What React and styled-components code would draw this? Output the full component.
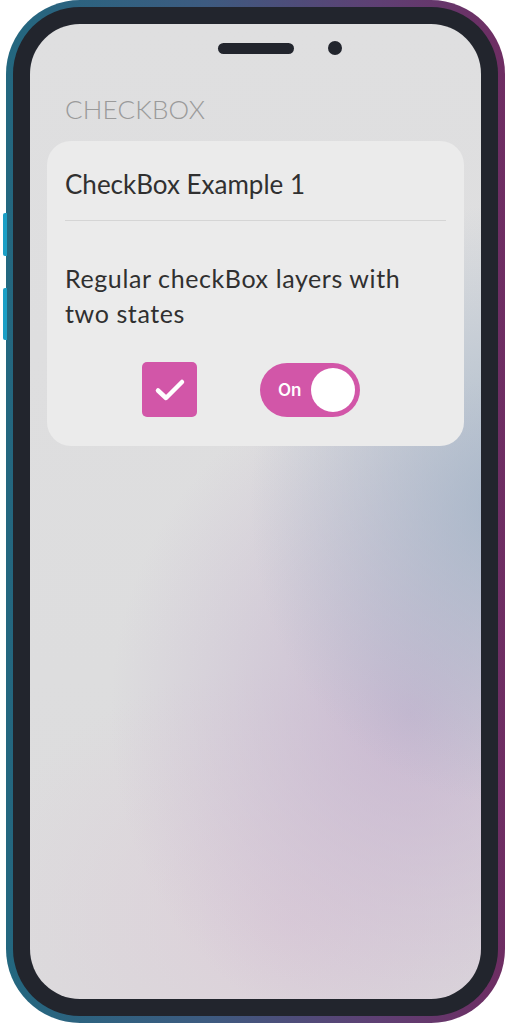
import React from 'react'
import styled, { createGlobalStyle } from 'styled-components'

const GlobalStyle = createGlobalStyle`
  html, body {
    margin: 0;
    padding: 0;
    background: #ffffff;
  }
  body {
    font-family: 'Lato', 'Noto Sans', sans-serif;
  }
`

const Stage = styled.div`
  width: 512px;
  height: 1024px;
  padding: 0 7px 1px 6px;
  box-sizing: border-box;
`

const Phone = styled.div`
  position: relative;
  height: 100%;
  box-sizing: border-box;
  padding: 7px;
  border-radius: 74px;
  background: linear-gradient(90deg, #23677f 0%, #3d5b80 40%, #5f3f73 75%, #6e2d62 100%);
`

const SideButton = styled.div`
  position: absolute;
  left: -3px;
  top: ${(p) => p.top}px;
  width: 4px;
  height: ${(p) => p.h}px;
  border-radius: 2px 0 0 2px;
  background: #1b9fc6;
`

const Bezel = styled.div`
  height: 100%;
  box-sizing: border-box;
  padding: 17px;
  border-radius: 67px;
  background: #22252d;
`

const Screen = styled.div`
  height: 100%;
  box-sizing: border-box;
  border-radius: 50px;
  overflow: hidden;
  display: flex;
  flex-direction: column;
  background:
    radial-gradient(ellipse 260px 300px at 480px 480px, rgba(160, 178, 198, 0.85), rgba(160, 178, 198, 0) 100%),
    radial-gradient(ellipse 300px 340px at 380px 690px, rgba(196, 176, 206, 0.8), rgba(196, 176, 206, 0) 100%),
    radial-gradient(ellipse 320px 260px at 260px 900px, rgba(220, 204, 216, 0.8), rgba(220, 204, 216, 0) 100%),
    linear-gradient(180deg, #dfdfe0 0%, #dcdcdd 100%);
`

const Notch = styled.div`
  display: flex;
  align-items: center;
  gap: 34px;
  padding: 18px 0 0 188px;
  height: 12px;
`

const Speaker = styled.div`
  width: 76px;
  height: 11px;
  border-radius: 6px;
  background: #22252d;
`

const Camera = styled.div`
  width: 14px;
  height: 14px;
  border-radius: 50%;
  background: #22252d;
`

const Title = styled.h1`
  margin: 39px 0 0 35px;
  font-size: 26px;
  font-weight: 300;
  color: #9a9a9a;
  letter-spacing: 0.2px;
  line-height: 32px;
`

const Card = styled.div`
  margin: 16px 17px 0 17px;
  padding: 27px 18px 29px 18px;
  border-radius: 24px;
  background: #ebebeb;
  display: flex;
  flex-direction: column;
`

const CardTitle = styled.div`
  font-size: 26px;
  color: #303030;
  line-height: 32px;
  padding-bottom: 20px;
  border-bottom: 1.5px solid #d5d5d5;
`

const CardText = styled.p`
  margin: 40px 0 0 0;
  max-width: 350px;
  font-size: 25px;
  line-height: 35px;
  letter-spacing: 0.6px;
  color: #303030;
`

const Controls = styled.div`
  display: flex;
  align-items: center;
  gap: 63px;
  margin-top: 31px;
  padding-left: 77px;
`

const CheckBox = styled.div`
  width: 55px;
  height: 55px;
  border-radius: 5px;
  background: #d256a8;
  display: flex;
  align-items: center;
  justify-content: center;
`

const Toggle = styled.div`
  width: 100px;
  height: 54px;
  box-sizing: border-box;
  border-radius: 27px;
  background: #d256a8;
  display: flex;
  align-items: center;
  justify-content: space-between;
  padding: 0 5px 0 18px;
`

const ToggleLabel = styled.span`
  font-family: 'Inter', 'Lato', sans-serif;
  font-weight: 600;
  font-size: 17px;
  color: #ffffff;
`

const Knob = styled.div`
  width: 44px;
  height: 44px;
  border-radius: 50%;
  background: #ffffff;
`

export default function App() {
  return (
    <>
      <GlobalStyle />
      <Stage>
        <Phone>
          <SideButton top={213} h={43} />
          <SideButton top={288} h={52} />
          <Bezel>
            <Screen>
              <Notch>
                <Speaker />
                <Camera />
              </Notch>
              <Title>CHECKBOX</Title>
              <Card>
                <CardTitle>CheckBox Example 1</CardTitle>
                <CardText>Regular checkBox layers with two states</CardText>
                <Controls>
                  <CheckBox>
                    <svg width="32" height="24" viewBox="0 0 32 24" fill="none">
                      <path d="M4 12.5 L12 20 L28 4" stroke="#ffffff" strokeWidth="4.5" strokeLinecap="round" strokeLinejoin="round" />
                    </svg>
                  </CheckBox>
                  <Toggle>
                    <ToggleLabel>On</ToggleLabel>
                    <Knob />
                  </Toggle>
                </Controls>
              </Card>
            </Screen>
          </Bezel>
        </Phone>
      </Stage>
    </>
  )
}
